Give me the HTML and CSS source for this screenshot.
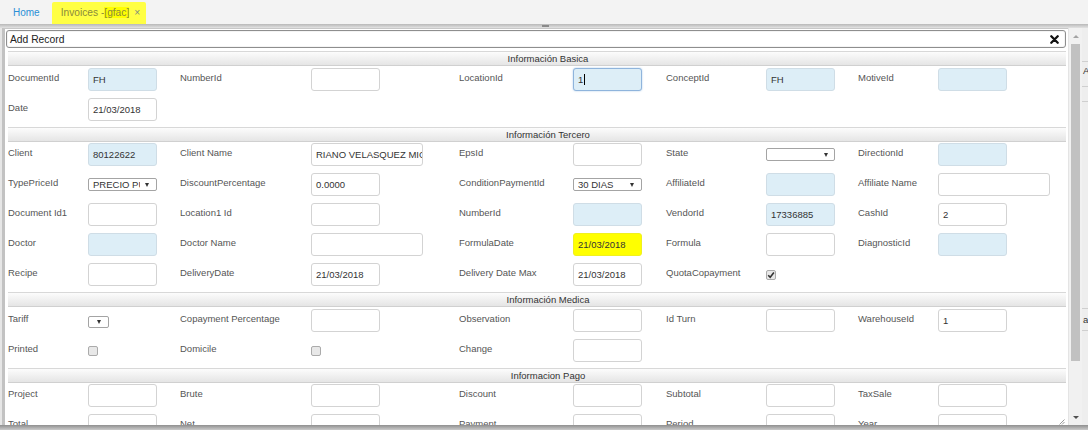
FILE: index.html
```html
<!DOCTYPE html>
<html>
<head>
<meta charset="utf-8">
<title>Invoices</title>
<link rel="stylesheet" href="styles.css">
</head>
<body>
<div class="tabs">
  <div class="tab home">Home</div>
  <div class="tab active">Invoices -<span class="hl">[gfac]</span><span class="tx">×</span></div>
</div>
<div class="strip"><span class="grip"></span></div>
<div class="main">
  <div class="dialog">
    <div class="title">
      <span>Add Record</span>
      <svg class="close" width="9" height="9" viewBox="0 0 9 9"><path d="M1.3 1.3 L7.7 7.7 M7.7 1.3 L1.3 7.7" stroke="#111" stroke-width="2.3" stroke-linecap="round"/></svg>
    </div>

    <div class="section first">
      <div class="sh">Información Basica</div>
      <div class="sb">
        <div class="row">
          <div class="lb">DocumentId</div><div><div class="f ro">FH</div></div>
          <div class="lb">NumberId</div><div><div class="f"></div></div>
          <div class="lb">LocationId</div><div><div class="f ro focus">1<span class="caret"></span></div></div>
          <div class="lb">ConceptId</div><div><div class="f ro">FH</div></div>
          <div class="lb">MotiveId</div><div><div class="f ro"></div></div>
        </div>
        <div class="row">
          <div class="lb">Date</div><div><div class="f">21/03/2018</div></div>
          <div></div><div></div><div></div><div></div><div></div><div></div><div></div><div></div>
        </div>
      </div>
    </div>

    <div class="section">
      <div class="sh">Información Tercero</div>
      <div class="sb">
        <div class="row">
          <div class="lb">Client</div><div><div class="f ro">80122622</div></div>
          <div class="lb">Client Name</div><div><div class="f w">RIANO VELASQUEZ MIGUEL</div></div>
          <div class="lb">EpsId</div><div><div class="f"></div></div>
          <div class="lb">State</div><div><div class="sel st"><span class="sv"></span><span class="ar"></span></div></div>
          <div class="lb">DirectionId</div><div><div class="f ro"></div></div>
        </div>
        <div class="row">
          <div class="lb">TypePriceId</div><div><div class="sel"><span class="sv">PRECIO PUBLICO</span><span class="ar"></span></div></div>
          <div class="lb">DiscountPercentage</div><div><div class="f">0.0000</div></div>
          <div class="lb">ConditionPaymentId</div><div><div class="sel"><span class="sv">30 DIAS</span><span class="ar"></span></div></div>
          <div class="lb">AffiliateId</div><div><div class="f ro"></div></div>
          <div class="lb">Affiliate Name</div><div><div class="f w"></div></div>
        </div>
        <div class="row">
          <div class="lb">Document Id1</div><div><div class="f"></div></div>
          <div class="lb">Location1 Id</div><div><div class="f"></div></div>
          <div class="lb">NumberId</div><div><div class="f ro"></div></div>
          <div class="lb">VendorId</div><div><div class="f ro">17336885</div></div>
          <div class="lb">CashId</div><div><div class="f">2</div></div>
        </div>
        <div class="row">
          <div class="lb">Doctor</div><div><div class="f ro"></div></div>
          <div class="lb">Doctor Name</div><div><div class="f w"></div></div>
          <div class="lb">FormulaDate</div><div><div class="f y">21/03/2018</div></div>
          <div class="lb">Formula</div><div><div class="f"></div></div>
          <div class="lb">DiagnosticId</div><div><div class="f ro"></div></div>
        </div>
        <div class="row">
          <div class="lb">Recipe</div><div><div class="f"></div></div>
          <div class="lb">DeliveryDate</div><div><div class="f">21/03/2018</div></div>
          <div class="lb">Delivery Date Max</div><div><div class="f">21/03/2018</div></div>
          <div class="lb">QuotaCopayment</div><div><div class="cb"><svg width="8" height="8" viewBox="0 0 8 8"><path d="M1.2 4.2 L3.2 6.2 L6.9 1.6" fill="none" stroke="#333" stroke-width="1.6"/></svg></div></div>
          <div></div><div></div>
        </div>
      </div>
    </div>

    <div class="section">
      <div class="sh">Información Medica</div>
      <div class="sb">
        <div class="row">
          <div class="lb">Tariff</div><div><div class="sel tariff"><span class="ar"></span></div></div>
          <div class="lb">Copayment Percentage</div><div><div class="f"></div></div>
          <div class="lb">Observation</div><div><div class="f"></div></div>
          <div class="lb">Id Turn</div><div><div class="f"></div></div>
          <div class="lb">WarehouseId</div><div><div class="f">1</div></div>
        </div>
        <div class="row">
          <div class="lb">Printed</div><div><div class="cb"></div></div>
          <div class="lb">Domicile</div><div><div class="cb"></div></div>
          <div class="lb">Change</div><div><div class="f"></div></div>
          <div></div><div></div><div></div><div></div>
        </div>
      </div>
    </div>

    <div class="section">
      <div class="sh">Informacion Pago</div>
      <div class="sb">
        <div class="row">
          <div class="lb">Project</div><div><div class="f"></div></div>
          <div class="lb">Brute</div><div><div class="f"></div></div>
          <div class="lb">Discount</div><div><div class="f"></div></div>
          <div class="lb">Subtotal</div><div><div class="f"></div></div>
          <div class="lb">TaxSale</div><div><div class="f"></div></div>
        </div>
        <div class="row">
          <div class="lb">Total</div><div><div class="f"></div></div>
          <div class="lb">Net</div><div><div class="f"></div></div>
          <div class="lb">Payment</div><div><div class="f"></div></div>
          <div class="lb">Period</div><div><div class="f"></div></div>
          <div class="lb">Year</div><div><div class="f"></div></div>
        </div>
      </div>
    </div>

    <svg class="resize" width="6" height="6" viewBox="0 0 6 6"><path d="M5.5 0.5 L0.5 5.5 M5.5 3 L3 5.5" stroke="#9a9a9a" stroke-width="1"/></svg>
  </div>
  <div class="vscroll">
    <div class="sbtn up"></div>
    <div class="thumb"></div>
    <div class="sgap"></div>
    <div class="sbtn down"></div>
  </div>
  <div class="behind">
    <div class="bl b1"></div>
    <div class="bt b2">A</div>
    <div class="bl b3"></div>
    <div class="bl b4"></div>
    <div class="bl b5"></div>
    <div class="bt b6">a</div>
    <div class="bl b7"></div>
  </div>
</div>
<div class="bottom"></div>
</body>
</html>
```

FILE: styles.css
```css
* { box-sizing: border-box; }
html, body { margin: 0; padding: 0; }
body {
  width: 1088px;
  height: 430px;
  overflow: hidden;
  background: #f2f2f2;
  font-family: "Liberation Sans", Arial, sans-serif;
  font-size: 9.5px;
  color: #555;
}

/* tabs */
.tabs {
  height: 24px;
  display: flex;
  align-items: flex-end;
  background: #f3f3f3;
}
.tab {
  height: 22px;
  line-height: 22px;
  font-size: 10.2px;
  white-space: nowrap;
}
.home { padding: 0 12px 0 13px; color: #2b8fd6; font-size: 10px; }
.active {
  background: #ffff44;
  color: #8a8a3c;
  padding: 0 6px 0 9px;
  border-radius: 2px 2px 0 0;
}
.hl { background: #ffff00; }
.tx { margin-left: 5px; color: #7e8e7e; }

.strip {
  height: 4px;
  background: linear-gradient(#b8b8b8, #e2e2e2);
  display: flex;
  align-items: center;
}
.grip {
  margin-left: 542px;
  width: 7px;
  height: 2px;
  background: #8a8a8a;
}

/* main area */
.main {
  height: 397px;
  display: flex;
  padding-left: 2px;
  background: #e6e6e6;
}
.dialog {
  position: relative;
  width: 1066px;
  height: 397px;
  overflow: hidden;
  background: #fff;
  border-left: 3px solid #c2c2c2;
  border-top: 1px solid #c8c8c8;
}
.title {
  margin: 1px 2px 0 1px;
  height: 18px;
  border: 1px solid #8e8e8e;
  border-radius: 3px;
  box-shadow: inset 0 0 0 1px #f4f4f4;
  display: flex;
  align-items: center;
  justify-content: space-between;
  padding: 0 6px 0 3px;
  font-size: 10.3px;
  color: #222;
}
.close { display: block; }

.section { margin: 0 2px 0 3px; }
.section.first { margin-top: 3px; }
.sh {
  height: 15px;
  line-height: 13px;
  border-top: 1px solid #d8d8d8;
  border-bottom: 1px solid #d0d0d0;
  background: linear-gradient(#fcfcfc, #e5e5e5);
  text-align: center;
  padding-left: 22px;
  color: #333;
}
.sb { padding: 1.5px 0 6px; }
.row {
  display: grid;
  grid-template-columns: 80px 92px 131px 148px 114px 93px 100px 92px 80px 128px;
  height: 23px;
  margin-bottom: 7px;
}
.row:last-child { margin-bottom: 0; }
.lb {
  padding-top: 4px;
  line-height: 11px;
  white-space: nowrap;
  color: #555;
}

/* fields */
.f {
  width: 69px;
  height: 23px;
  border: 1px solid #d3d3d3;
  border-radius: 3px;
  background: #fff;
  padding: 0 4px;
  line-height: 22px;
  color: #333;
  white-space: nowrap;
  overflow: hidden;
}
.f.w { width: 112px; }
.f.ro { background: #ddeef7; border-color: #cfdde6; }
.f.y { background: #ffff00; border-color: #f0f020; }
.f.focus { border-color: #8fb4dc; box-shadow: 0 0 2px #a9c8e8; }
.caret {
  display: inline-block;
  width: 1px;
  height: 11px;
  background: #000;
  vertical-align: -2px;
  margin-left: 1px;
}

.sel {
  margin-top: 5px;
  width: 69px;
  height: 13px;
  border: 1px solid #a4a4a4;
  border-radius: 2px;
  background: #fff;
  display: flex;
  align-items: center;
  padding: 0 7px 0 4px;
  color: #333;
  line-height: 11px;
  overflow: hidden;
}
.sel.st { padding-right: 6px; }
.sv {
  flex: 1;
  overflow: hidden;
  white-space: nowrap;
  margin-right: 5px;
}
.ar {
  flex: none;
  width: 0;
  height: 0;
  border-left: 2.5px solid transparent;
  border-right: 2.5px solid transparent;
  border-top: 4px solid #333;
}
.sel.tariff {
  margin-top: 7px;
  width: 21px;
  height: 12px;
  justify-content: center;
  padding: 0;
}

.cb {
  margin-top: 7px;
  width: 10px;
  height: 10px;
  border: 1px solid #ababab;
  border-radius: 2px;
  background: #e8e8e8;
  display: flex;
  align-items: center;
  justify-content: center;
}
.cb svg { display: block; }

.resize {
  position: absolute;
  right: 3px;
  bottom: 0;
}

/* scrollbar */
.vscroll {
  width: 14px;
  height: 397px;
  background: #f1f1f1;
  border-left: 1px solid #e4e4e4;
  display: flex;
  flex-direction: column;
  align-items: center;
}
.sbtn {
  height: 16px;
  width: 100%;
  display: flex;
  align-items: center;
  justify-content: center;
}
.sbtn::before {
  content: "";
  width: 0;
  height: 0;
  border-left: 3px solid transparent;
  border-right: 3px solid transparent;
}
.up::before { border-bottom: 3px solid #a3a3a3; }
.down::before { border-top: 3px solid #505050; }
.thumb {
  width: 9px;
  height: 317px;
  background: #c1c1c1;
}
.sgap { flex: 1; }

/* page behind the dialog */
.behind {
  width: 6px;
  height: 397px;
  background: #eeeeee;
  overflow: hidden;
}
.bl { height: 1px; background: #cfcfcf; }
.bt { line-height: 10px; color: #333; padding-left: 1px; font-size: 9.5px; }
.b1 { margin-top: 33px; }
.b2 { margin-top: 4px; }
.b3 { margin-top: 10px; }
.b4 { margin-top: 14px; }
.b5 { margin-top: 206px; }
.b6 { margin-top: 6px; }
.b7 { margin-top: 5px; }

.bottom {
  height: 5px;
  background: linear-gradient(#8f8f8f, #cacaca);
}
```
